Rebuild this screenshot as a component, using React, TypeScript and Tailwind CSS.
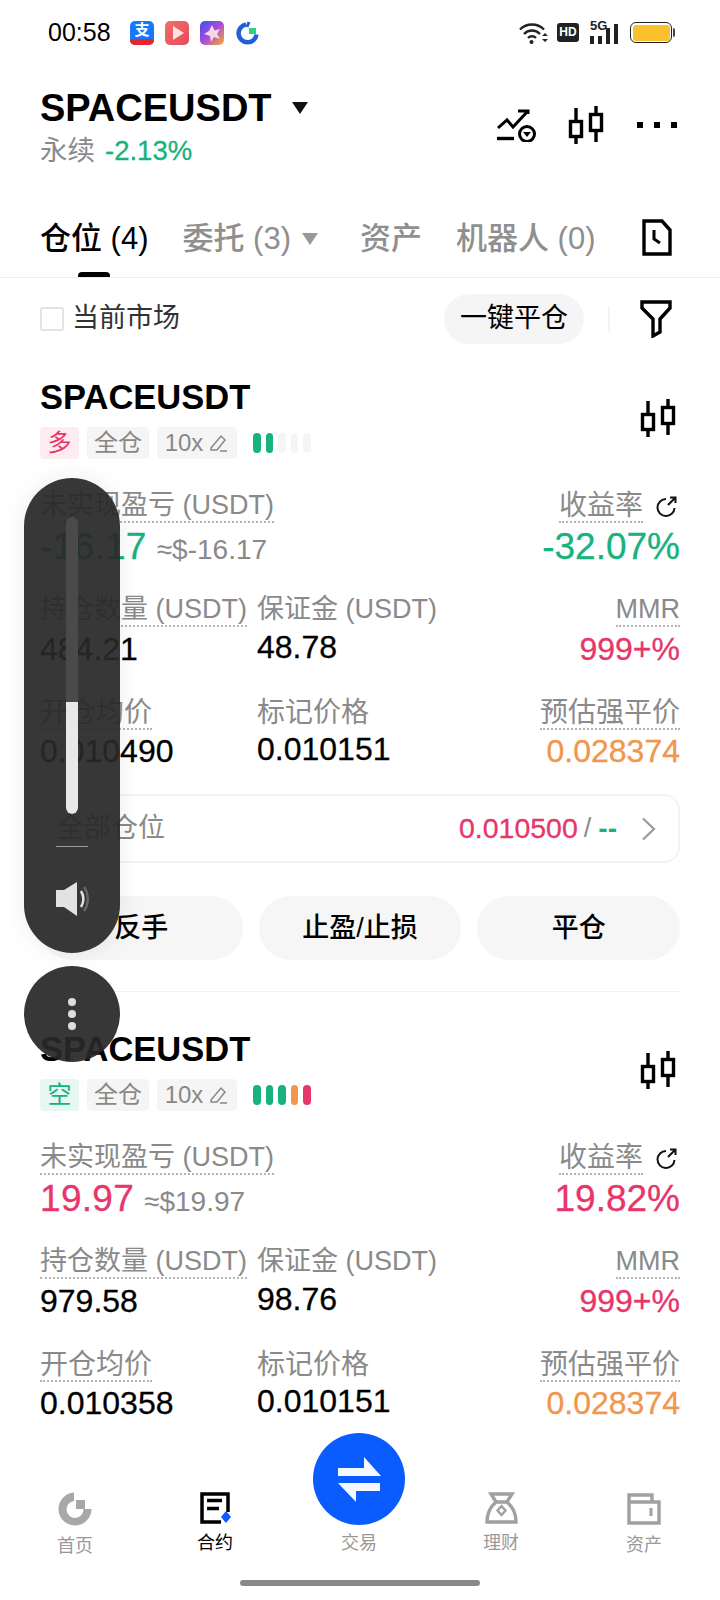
import type { ReactNode } from "react";

const UP = "text-[#e8356a]";
const DOWN = "text-[#17b27e]";
const VALUE = "text-[32px] leading-[36px] [-webkit-text-stroke:0.3px_currentColor]";

const Candle = () => (
  <svg width="36" height="38" viewBox="0 0 36 38" fill="none" stroke="#000" strokeWidth="3.4">
    <path d="M8 2v36M28 0v36" />
    <rect x="2.5" y="15.5" width="11" height="15" fill="#fff" />
    <rect x="22.5" y="8.5" width="11" height="16" fill="#fff" />
  </svg>
);

const Trend = () => (
  <svg width="40" height="34" viewBox="0 0 40 34" fill="none" stroke="#000" strokeWidth="3">
    <path d="M1 20l9-8 6 7 14-15M21 3h10v3" />
    <path d="M0 30.5h17" strokeWidth="3.4" />
    <circle cx="30" cy="26" r="7.5" />
    <path d="M26 24h8l-4 5z" fill="#000" stroke="none" />
  </svg>
);

const Refresh = () => (
  <svg width="22" height="22" viewBox="0 0 22 22" fill="none" stroke="#111" strokeWidth="2">
    <path d="M11 3a8.5 8.5 0 1 0 8.5 9" />
    <path d="M13 9l7-7M15 1.5h5.5V7" />
  </svg>
);

const Bars = ({ colors }: { colors: string[] }) => (
  <div className="flex gap-[5px] ml-2">
    {colors.map((c, i) => (
      <span key={i} className={`w-[7.5px] h-[20px] rounded-full ${c}`} />
    ))}
  </div>
);

type FieldProps = {
  label: ReactNode;
  value: ReactNode;
  right?: boolean;
  dotted?: boolean;
  cjk?: boolean;
  extra?: ReactNode;
};

const Field = ({ label, value, right, dotted = true, cjk, extra }: FieldProps) => (
  <div className={`flex flex-col ${right ? "items-end" : "items-start"}`}>
    <div className="flex items-center">
      <span
        className={`${cjk ? "text-[28px]" : "text-[27px]"} leading-[31px] text-[#8a8a8a] whitespace-nowrap ${
          dotted ? "border-b-2 border-dotted border-[#b4b4b4]" : ""
        }`}
      >
        {label}
      </span>
      {extra}
    </div>
    {value}
  </div>
);

type CardProps = {
  side: string;
  sideClass: string;
  bars: string[];
  pnl: string;
  pnlClass: string;
  usd: string;
  rate: string;
  rateClass: string;
  qty: string;
  margin: string;
  entry: string;
  actions?: boolean;
};

const Card = ({ side, sideClass, bars, pnl, pnlClass, usd, rate, rateClass, qty, margin, entry, actions }: CardProps) => (
  <section className="px-10">
    <div className="flex justify-between items-start">
      <div>
        <h2 className="text-[34.5px] leading-[38px] font-bold text-black">SPACEUSDT</h2>
        <div className="flex items-center gap-2 mt-[11px]">
          <span className={`w-[39px] h-[32px] rounded flex items-center justify-center text-[24px] ${sideClass}`}>{side}</span>
          <span className="w-[62px] h-[32px] rounded bg-[#f5f5f5] flex items-center justify-center text-[24px] text-[#888]">全仓</span>
          <span className="w-[80px] h-[32px] rounded bg-[#f5f5f5] flex items-center justify-center gap-[6px] text-[24px] text-[#888]">
            10x
            <svg width="20" height="20" viewBox="0 0 20 20" fill="none" stroke="#888" strokeWidth="1.5">
              <path d="M2 15L12 3l4 4-8 10H2zM11 18h7" />
            </svg>
          </span>
          <Bars colors={bars} />
        </div>
      </div>
      <div className="mt-[21px] mr-1">
        <Candle />
      </div>
    </div>

    <div className="grid grid-cols-[217px_1fr_auto] mt-[31px]">
      <div className="col-span-2">
        <Field
          label="未实现盈亏 (USDT)"
          value={
            <div className="flex items-baseline gap-[10px] mt-[3px] h-[42px]">
              <span className={`text-[37px] leading-[42px] tracking-[0.3px] [-webkit-text-stroke:0.3px_currentColor] ${pnlClass}`}>{pnl}</span>
              <span className="text-[28px] text-[#8a8a8a]">{usd}</span>
            </div>
          }
        />
      </div>
      <Field
        right
        cjk
        label="收益率"
        extra={
          <span className="ml-3 mr-[3px]">
            <Refresh />
          </span>
        }
        value={<span className={`text-[37px] leading-[42px] mt-[3px] [-webkit-text-stroke:0.3px_currentColor] ${rateClass}`}>{rate}</span>}
      />

      <div className="mt-[26px]">
        <Field label="持仓数量 (USDT)" value={<span className={`${VALUE} mt-[4px] text-black`}>{qty}</span>} />
      </div>
      <div className="mt-[26px]">
        <Field dotted={false} label="保证金 (USDT)" value={<span className={`${VALUE} mt-[4px] text-black`}>{margin}</span>} />
      </div>
      <div className="mt-[26px]">
        <Field right label="MMR" value={<span className={`${VALUE} mt-[4px] ${UP}`}>999+%</span>} />
      </div>

      <div className="mt-[30px]">
        <Field cjk label="开仓均价" value={<span className={`${VALUE} mt-[3px] text-black`}>{entry}</span>} />
      </div>
      <div className="mt-[30px]">
        <Field cjk dotted={false} label="标记价格" value={<span className={`${VALUE} mt-[3px] text-black`}>0.010151</span>} />
      </div>
      <div className="mt-[30px]">
        <Field cjk right label="预估强平价" value={<span className={`${VALUE} mt-[3px] text-[#f0964d]`}>0.028374</span>} />
      </div>
    </div>

    {actions && (
      <>
        <div className="mt-[25px] h-[69px] border-2 border-[#f3f3f3] rounded-2xl flex items-center pl-[15px] pr-[22px]">
          <span className="text-[27px] text-[#8a8a8a]">全部仓位</span>
          <span className={`ml-auto text-[28.5px] [-webkit-text-stroke:0.3px_currentColor] ${UP}`}>0.010500</span>
          <span className="text-[27px] text-[#8a8a8a] ml-[6px]">/</span>
          <span className={`text-[28px] font-bold ml-[7px] ${DOWN}`}>--</span>
          <svg className="ml-[24px]" width="15" height="24" viewBox="0 0 15 24" fill="none" stroke="#999" strokeWidth="2.2">
            <path d="M2 1.5L13 12 2 22.5" />
          </svg>
        </div>

        <div className="grid grid-cols-3 gap-[16px] mt-[33px]">
          {["反手", "止盈/止损", "平仓"].map((t) => (
            <button key={t} className="h-[64px] rounded-full bg-[#f6f6f6] text-[27px] font-medium text-black">
              {t}
            </button>
          ))}
        </div>
      </>
    )}
  </section>
);

const StatusBar = () => (
  <div className="h-[64px] flex items-center pl-12 pr-[45px] pt-[1px]">
    <span className="text-[25px] text-black w-[82px]">00:58</span>
    <div className="flex gap-[11px]">
      <div className="w-6 h-6 rounded-[5px] bg-[#1677ff] overflow-hidden flex flex-col items-center">
        <span className="text-[15px] leading-[18px] font-bold text-white">支</span>
        <span className="w-full h-[6px] bg-[#e8242c]" />
      </div>
      <svg width="24" height="24" viewBox="0 0 24 24">
        <defs>
          <linearGradient id="vid" x1="0" y1="0" x2="1" y2="1">
            <stop offset="0" stopColor="#f0706a" />
            <stop offset="1" stopColor="#e8485a" />
          </linearGradient>
        </defs>
        <rect width="24" height="24" rx="5" fill="url(#vid)" />
        <path d="M8 5l11 7-11 7z" fill="#fde3df" />
      </svg>
      <svg width="24" height="24" viewBox="0 0 24 24">
        <defs>
          <linearGradient id="star" x1="0" y1="0" x2="1" y2="1">
            <stop offset="0" stopColor="#3f4fe8" />
            <stop offset="0.5" stopColor="#a84ce0" />
            <stop offset="1" stopColor="#ffb020" />
          </linearGradient>
        </defs>
        <rect width="24" height="24" rx="5" fill="url(#star)" />
        <path d="M12 4l2.5 5.5L20 8l-3 5 3 5-6-2-3 5-1-6-6-2 5-3z" fill="#f6d8e4" />
      </svg>
      <svg width="24" height="24" viewBox="0 0 24 24" fill="none">
        <path d="M11 3.5a9 9 0 1 0 10.5 10" stroke="#1f5fdc" strokeWidth="4.5" />
        <path d="M14 1l-2 5" stroke="#1f5fdc" strokeWidth="3" />
        <rect x="14" y="7" width="7" height="6" fill="#2ad08a" />
      </svg>
    </div>
    <div className="ml-auto flex items-center">
      <svg width="30" height="24" viewBox="0 0 30 24" fill="none" stroke="#222" strokeWidth="2.4">
        <path d="M1 8.5a17 17 0 0 1 24 0M5 13a11 11 0 0 1 16 0M9 17a5.5 5.5 0 0 1 8 0" />
        <circle cx="12.5" cy="21" r="2" fill="#222" stroke="none" />
        <path d="M23 15h6l-3-3zM23 18h6l-3 3z" fill="#222" stroke="none" />
      </svg>
      <span className="ml-2 w-[22px] h-[19px] rounded-[3px] bg-[#222] text-white text-[12px] leading-[19px] font-bold text-center">HD</span>
      <div className="ml-[11px] flex items-end gap-[4px] h-[22px] relative w-[31px]">
        <span className="absolute left-0 -top-[3px] text-[13px] leading-[13px] font-bold text-[#222]">5G</span>
        <span className="w-[4px] h-[8px] bg-[#222]" />
        <span className="w-[4px] h-[8px] bg-[#222]" />
        <span className="w-[4px] h-[16px] bg-[#222]" />
        <span className="w-[4px] h-[20px] bg-[#222]" />
      </div>
      <div className="ml-[9px] w-[42px] h-[21px] rounded-[6px] border-[1.5px] border-[#222] p-[1.5px]">
        <div className="w-full h-full rounded-[3px] bg-[#fbc02d]" />
      </div>
      <span className="w-[2px] h-[9px] bg-[#444] ml-[1px] rounded-r" />
    </div>
  </div>
);

const NavLabel = ({ children, on }: { children: ReactNode; on?: boolean }) => (
  <span className={`text-[18px] leading-[22px] ${on ? "text-black" : "text-[#999]"}`}>{children}</span>
);

const BottomNav = () => (
  <nav className="relative h-[180px] bg-white grid grid-cols-[150px_130px_158px_126px_156px] pt-[71px] shrink-0">
    <div className="flex flex-col items-center gap-[9px] pt-[1px]">
      <svg width="34" height="34" viewBox="0 0 34 34" fill="#a8a8a8">
        <path d="M16 0.5V9A8.5 8.5 0 1 0 25.5 17H33.5A16.5 16.5 0 1 1 16 0.5z" />
        <rect x="18" y="8" width="9" height="9" />
      </svg>
      <NavLabel>首页</NavLabel>
    </div>
    <div className="flex flex-col items-center gap-[8px]">
      <svg width="32" height="33" viewBox="0 0 32 33" fill="none">
        <path d="M29 21V3H3v28h19" stroke="#000" strokeWidth="3.5" />
        <path d="M8 9.5h15M8 17.5h12" stroke="#000" strokeWidth="3.5" />
        <path d="M27 20l5 6-5 6-5-6z" fill="#0a5cff" />
      </svg>
      <NavLabel on>合约</NavLabel>
    </div>
    <div className="flex flex-col items-center pt-[41px]">
      <NavLabel>交易</NavLabel>
    </div>
    <div className="flex flex-col items-center gap-[8px]">
      <svg width="33" height="33" viewBox="0 0 33 33" fill="none" stroke="#a0a0a0" strokeWidth="3.4">
        <path d="M6 3h21l-5 8H11zM11 11C5 16 2 22 2 31h29c0-9-3-15-9-20" />
        <path d="M16.5 15l4 4.5-4 4.5-4-4.5z" strokeWidth="2.4" />
      </svg>
      <NavLabel>理财</NavLabel>
    </div>
    <div className="flex flex-col items-center gap-[9px] pl-1 pt-[2px]">
      <svg width="34" height="32" viewBox="0 0 34 32" fill="none" stroke="#a0a0a0" strokeWidth="3.4">
        <path d="M2 30V2h23v7M2 9h30v21H2z" />
        <path d="M24 15v8" strokeWidth="3" />
      </svg>
      <NavLabel>资产</NavLabel>
    </div>
    <div className="absolute left-[313px] top-[13px] w-[92px] h-[92px] rounded-full bg-[#0a5cff] flex items-center justify-center">
      <svg width="92" height="92" viewBox="0 0 92 92" fill="#f4f8ff">
        <path d="M25 35H51V24L68 43H25z" />
        <path d="M25 50H67V58H43V69z" />
      </svg>
    </div>
    <div className="absolute left-[240px] top-[160px] w-[240px] h-[6px] rounded-full bg-[#888]" />
  </nav>
);

const VolumePanel = () => (
  <>
    <div className="absolute left-6 top-[478px] w-24 h-[475px] rounded-full bg-[#282828]/[.93] shadow-[0_0_24px_rgba(0,0,0,0.08)] flex flex-col items-center pt-[39px]">
      <div className="w-3 h-[297px] rounded-full bg-[#4a4a4a] overflow-hidden flex flex-col justify-end">
        <div className="h-[112px] rounded-b-full bg-[#e8e8e8]" />
      </div>
      <span className="w-8 h-px bg-[#999] mt-[32px]" />
      <svg className="mt-[35px]" width="36" height="34" viewBox="0 0 36 34" fill="none">
        <path d="M2 8h8L23 0v34L10 25H2z" fill="#e2e2e2" />
        <path d="M27 9c3 5 3 11 0 16" stroke="#e2e2e2" strokeWidth="2.5" />
        <path d="M30 5c5 7 5 17 0 24" stroke="#666" strokeWidth="2.5" />
      </svg>
    </div>
    <div className="absolute left-6 top-[966px] w-24 h-24 rounded-full bg-[#282828]/[.93] flex flex-col items-center justify-center gap-[4px]">
      <span className="w-2 h-2 rounded-full bg-[#ddd]" />
      <span className="w-2 h-2 rounded-full bg-[#ddd]" />
      <span className="w-2 h-2 rounded-full bg-[#ddd]" />
    </div>
  </>
);

export default function App() {
  const greenBars = ["bg-[#17b27e]", "bg-[#17b27e]", "bg-[#f4f5f5]", "bg-[#f4f5f5]", "bg-[#f4f5f5]"];
  const riskBars = ["bg-[#17b27e]", "bg-[#17b27e]", "bg-[#17b27e]", "bg-[#f0964d]", "bg-[#e8356a]"];

  return (
    <div className="relative w-[720px] h-[1600px] overflow-hidden bg-white flex flex-col font-['Liberation_Sans','Noto_Sans_CJK_SC',sans-serif]">
      <StatusBar />

      <div className="flex-1 min-h-0 overflow-hidden">
        <header className="h-[151px] px-10 pt-[21px] flex justify-between items-start">
          <div>
            <div className="flex items-center">
              <h1 className="text-[38px] leading-[46px] font-bold text-black">SPACEUSDT</h1>
              <svg className="ml-[20px]" width="16" height="12" viewBox="0 0 16 12" fill="#111">
                <path d="M0 0h16L8 12z" />
              </svg>
            </div>
            <div className="flex items-center text-[27.5px] leading-[36px] mt-[2px]">
              <span className="text-[#8a8a8a]">永续</span>
              <span className={`ml-[10px] [-webkit-text-stroke:0.3px_currentColor] ${DOWN}`}>-2.13%</span>
            </div>
          </div>
          <div className="flex items-center mt-[21px]">
            <Trend />
            <span className="ml-[31px]">
              <Candle />
            </span>
            <span className="ml-[33px] flex gap-[11px] mr-[3px]">
              <i className="w-[6px] h-[6px] bg-black" />
              <i className="w-[6px] h-[6px] bg-black" />
              <i className="w-[6px] h-[6px] bg-black" />
            </span>
          </div>
        </header>

        <div className="h-[63px] border-b border-[#eeeeee] px-10 flex items-start pt-[4px] relative text-[31px] leading-[40px] font-medium text-[#8f8f8f]">
          <span className="text-black">仓位 (4)</span>
          <span className="ml-[34px]">委托 (3)</span>
          <svg className="ml-[11px] mt-[14px]" width="16" height="12" viewBox="0 0 16 12" fill="#999">
            <path d="M0 0h16L8 12z" />
          </svg>
          <span className="ml-[42px]">资产</span>
          <span className="ml-[34px]">机器人 (0)</span>
          <svg className="ml-auto mr-2" width="30" height="37" viewBox="0 0 30 37" fill="none" stroke="#000" strokeWidth="3.4">
            <path d="M2 2h18l8 9v24H2z" />
            <path d="M12 11v9l6 4" strokeWidth="3" />
          </svg>
          <span className="absolute left-[78px] bottom-0 w-8 h-[5px] rounded-t bg-black" />
        </div>

        <div className="h-[81px] px-10 flex items-center">
          <span className="w-[24px] h-[24px] rounded-[3px] border-2 border-[#e3e3e3]" />
          <span className="ml-[8px] text-[27px] text-[#333]">当前市场</span>
          <button className="ml-auto w-[140px] h-[50px] rounded-full bg-[#f5f5f5] text-[27px] text-black">一键平仓</button>
          <span className="ml-[24px] w-[2px] h-[26px] bg-[#f4f4f4]" />
          <svg className="ml-[30px] mr-[8px]" width="32" height="38" viewBox="0 0 32 38" fill="none" stroke="#000" strokeWidth="3.4">
            <path d="M2 2h28v6L20 19v13l-7 4V19L2 8z" />
          </svg>
        </div>

        <div className="pt-[19px]">
          <Card
            actions
            side="多"
            sideClass="bg-[#fdecf0] text-[#e8356a]"
            bars={greenBars}
            pnl="-16.17"
            pnlClass={DOWN}
            usd="≈$-16.17"
            rate="-32.07%"
            rateClass={DOWN}
            qty="484.21"
            margin="48.78"
            entry="0.010490"
          />
          <div className="mx-10 mt-[31px] mb-[38px] h-px bg-[#f2f2f2]" />
          <Card
            side="空"
            sideClass="bg-[#e6f8f1] text-[#17b27e]"
            bars={riskBars}
            pnl="19.97"
            pnlClass={UP}
            usd="≈$19.97"
            rate="19.82%"
            rateClass={UP}
            qty="979.58"
            margin="98.76"
            entry="0.010358"
          />
        </div>
      </div>

      <BottomNav />
      <VolumePanel />
    </div>
  );
}
